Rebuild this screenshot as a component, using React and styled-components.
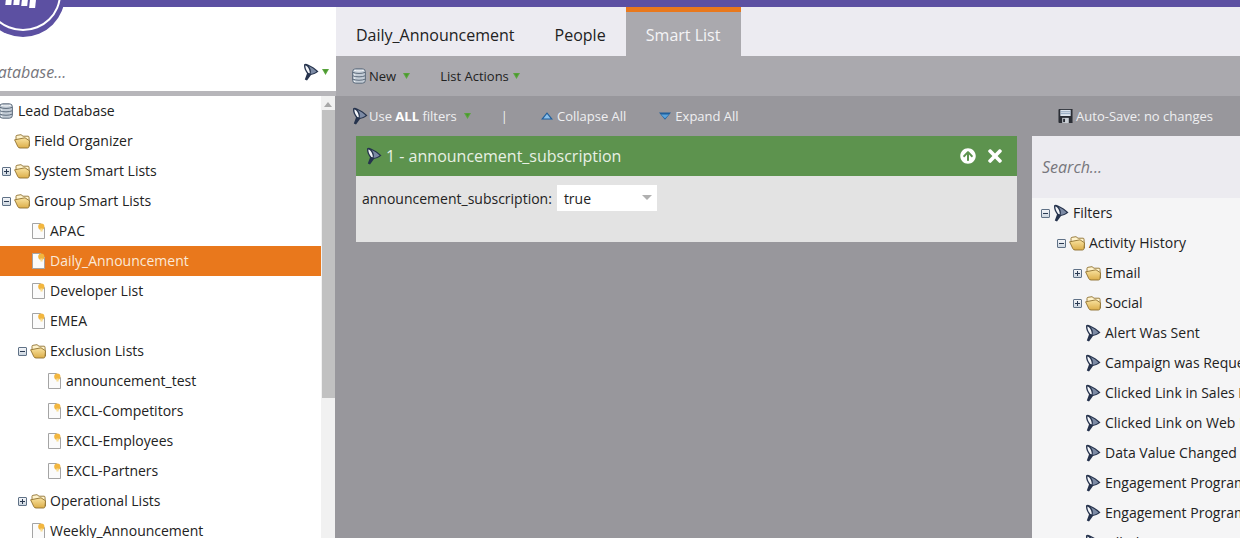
import React from "react";
import styled, { createGlobalStyle } from "styled-components";
import { FaArrowCircleUp, FaTimes } from "react-icons/fa";

const GlobalStyle = createGlobalStyle`
    html, body {
        margin: 0;
        padding: 0;
        background: #ffffff;
    }
    * {
        box-sizing: border-box;
    }
`;

const leadTree = [
    { depth: 0, icon: "db", label: "Lead Database" },
    { depth: 1, icon: "folder", label: "Field Organizer" },
    { depth: 1, icon: "folder", toggle: "plus", label: "System Smart Lists" },
    { depth: 1, icon: "folder", toggle: "minus", label: "Group Smart Lists" },
    { depth: 2, icon: "doc", label: "APAC" },
    { depth: 2, icon: "doc", label: "Daily_Announcement", selected: true },
    { depth: 2, icon: "doc", label: "Developer List" },
    { depth: 2, icon: "doc", label: "EMEA" },
    { depth: 2, icon: "folder", toggle: "minus", label: "Exclusion Lists" },
    { depth: 3, icon: "doc", label: "announcement_test" },
    { depth: 3, icon: "doc", label: "EXCL-Competitors" },
    { depth: 3, icon: "doc", label: "EXCL-Employees" },
    { depth: 3, icon: "doc", label: "EXCL-Partners" },
    { depth: 2, icon: "folder", toggle: "plus", label: "Operational Lists" },
    { depth: 2, icon: "doc", label: "Weekly_Announcement" },
];

const filterTree = [
    { depth: 1, icon: "funnel", toggle: "minus", label: "Filters" },
    { depth: 2, icon: "folder", toggle: "minus", label: "Activity History" },
    { depth: 3, icon: "folder", toggle: "plus", label: "Email" },
    { depth: 3, icon: "folder", toggle: "plus", label: "Social" },
    { depth: 3, icon: "funnel", label: "Alert Was Sent" },
    { depth: 3, icon: "funnel", label: "Campaign was Requested" },
    { depth: 3, icon: "funnel", label: "Clicked Link in Sales Email" },
    { depth: 3, icon: "funnel", label: "Clicked Link on Web Page" },
    { depth: 3, icon: "funnel", label: "Data Value Changed" },
    { depth: 3, icon: "funnel", label: "Engagement Program Cadence" },
    { depth: 3, icon: "funnel", label: "Engagement Program Email" },
    { depth: 3, icon: "funnel", label: "Filled Out Form" },
];

function FunnelIcon() {
    return (
        <svg width="16" height="18" viewBox="0 0 16 18">
            <path
                d="M1 1.5 Q2.5 0.2 5 1.5 C9 3.2 12.5 5.6 15.5 8.5 C12.5 10.8 10 11.5 8 12 L4 17.5 L1.8 16.5 L4 10.5 C2 7.5 0.8 5 1 1.5 Z"
                fill="#26334d"
            />
            <path d="M5.5 3 C9 4.6 11.5 6.5 13.6 8.4 C11.5 9.8 9.5 10.6 7.5 10.8 C8.5 8 7.5 5 5.5 3 Z" fill="#7c8aa4" />
            <path d="M2.3 2.6 C4.5 3.2 6.6 6 6.8 10.2 L5.4 10 C3.5 7.8 2.4 5.4 2.3 2.6 Z" fill="#f4f6fa" />
        </svg>
    );
}

function FolderIcon() {
    return (
        <svg width="16" height="15" viewBox="0 0 16 15">
            <defs>
                <linearGradient id="folderFront" x1="0" y1="0" x2="0" y2="1">
                    <stop offset="0" stopColor="#f9e3a0" />
                    <stop offset="1" stopColor="#dcae4a" />
                </linearGradient>
            </defs>
            <path
                d="M2 4.5 L2 2.4 Q2 1.4 3 1.3 L7 0.7 L9 2.2 L14 2.2 Q15 2.2 15 3.2 L15.5 12 L5 13.5 Z"
                fill="#fff3cc"
                stroke="#8f7130"
                strokeWidth="0.9"
            />
            <path
                d="M0.6 5.8 L11 3.8 L15.5 6.8 L15 12.6 Q14.8 14 13.5 14 L6 14 Q4.5 14 3.8 12.6 Z"
                fill="url(#folderFront)"
                stroke="#8f7130"
                strokeWidth="0.9"
                strokeLinejoin="round"
            />
        </svg>
    );
}

function DocIcon() {
    return (
        <svg width="13" height="16" viewBox="0 0 13 16">
            <path d="M0.5 0.5 H8.5 L12.5 4.5 V15.5 H0.5 Z" fill="#fbfbfb" stroke="#a4a4a4" />
            <circle cx="9.3" cy="3.7" r="3.1" fill="#f2b63f" />
            <rect x="8.4" y="5.5" width="2.2" height="3" fill="#f8dc92" />
        </svg>
    );
}

function DbIcon() {
    return (
        <svg width="14" height="16" viewBox="0 0 14 16">
            <rect x="0.6" y="0.8" width="12.8" height="14.4" rx="3" fill="#c3ccd6" stroke="#5e6c7c" />
            <path
                d="M1 4.4 C4 5.8 10 5.8 13 4.4 M1 7.8 C4 9.2 10 9.2 13 7.8 M1 11.2 C4 12.6 10 12.6 13 11.2"
                fill="none"
                stroke="#5e6c7c"
            />
            <path d="M2 2.2 C5 3.2 9 3.2 12 2.2" fill="none" stroke="#f4f6f8" />
            <path d="M2.6 6.2 V7.4 M2.6 9.6 V10.8 M2.6 13 V14" stroke="#f4f6f8" strokeWidth="1.3" />
        </svg>
    );
}

function SaveIcon() {
    return (
        <svg width="15" height="16" viewBox="0 0 16 16">
            <path d="M0.5 1.5 Q0.5 0.5 1.5 0.5 H15.5 V15.5 H1.5 Q0.5 15.5 0.5 14.5 Z" fill="#2b2e35" />
            <rect x="2.5" y="1.5" width="11" height="6.5" fill="#dfe6ee" />
            <rect x="2.5" y="3" width="11" height="1" fill="#8fa4bb" />
            <rect x="2.5" y="5" width="11" height="1" fill="#8fa4bb" />
            <rect x="4.5" y="10" width="7" height="5.5" fill="#c9ced4" />
            <rect x="5.5" y="11" width="2" height="3.5" fill="#2b2e35" />
        </svg>
    );
}

function TreeIcon({ name }) {
    if (name === "db") return <DbIcon />;
    if (name === "folder") return <FolderIcon />;
    if (name === "doc") return <DocIcon />;
    return <FunnelIcon />;
}

function GreenArrow() {
    return (
        <svg width="9" height="8" viewBox="0 0 9 8">
            <path d="M1 1 H8 L4.5 7 Z" fill="#5aa63e" />
            <path d="M2.8 1.8 H6.2 L4.5 4.8 Z" fill="#4a9630" />
        </svg>
    );
}

function BlueTriangle({ dir }) {
    const points = dir === "up" ? "6,0.2 12,7.6 0,7.6" : "0,0.4 12,0.4 6,7.8";
    const band = dir === "up" ? "6,2 9.6,6.6 2.4,6.6" : "2,2.6 10,2.6 6,6.4";
    return (
        <svg width="12" height="8" viewBox="0 0 12 8">
            <polygon points={points} fill="#1f5f9c" />
            <polygon points={band} fill={dir === "up" ? "#8cc0ea" : "#5aa3dc"} />
        </svg>
    );
}

function TreeRow({ row }) {
    return (
        <Row $selected={row.selected}>
            <Indent $depth={row.depth}>
                {row.toggle && (
                    <Toggle>
                        <ToggleBar />
                        {row.toggle === "plus" && <ToggleBar $vertical />}
                    </Toggle>
                )}
            </Indent>
            <IconSlot>
                <TreeIcon name={row.icon} />
            </IconSlot>
            <RowLabel>{row.label}</RowLabel>
        </Row>
    );
}

function App() {
    return (
        <Page>
            <GlobalStyle />
            <TopBar />
            <Logo>
                <LogoBar $h={5} />
                <LogoBar $h={5} />
                <LogoBar $h={6} />
                <LogoBar $h={8} />
            </Logo>
            <Columns>
                <LeadPanel>
                    <LeadSearch>
                        <LeadPlaceholder>Database...</LeadPlaceholder>
                        <LeadFilter>
                            <FunnelIcon />
                            <GreenArrow />
                        </LeadFilter>
                    </LeadSearch>
                    <LeadBody>
                        <LeadRows>
                            {leadTree.map((row) => (
                                <TreeRow key={row.label} row={row} />
                            ))}
                        </LeadRows>
                        <ScrollTrack>
                            <ScrollArrow />
                            <ScrollThumb />
                        </ScrollTrack>
                    </LeadBody>
                </LeadPanel>
                <Main>
                    <Tabs>
                        <Tab>Daily_Announcement</Tab>
                        <Tab>People</Tab>
                        <ActiveTab>Smart List</ActiveTab>
                    </Tabs>
                    <ActionBar>
                        <ActionItem>
                            <DbIcon />
                            New
                            <ArrowGap $left={3}>
                                <GreenArrow />
                            </ArrowGap>
                        </ActionItem>
                        <ActionItem>
                            List Actions
                            <GreenArrow />
                        </ActionItem>
                    </ActionBar>
                    <FilterBar>
                        <FilterGroup>
                            <FilterItem $gap={1}>
                                <FunnelIcon />
                                <span>
                                    Use <b>ALL</b> filters
                                </span>
                                <ArrowGap $left={5}>
                                    <GreenArrow />
                                </ArrowGap>
                            </FilterItem>
                            <Pipe>|</Pipe>
                            <FilterItem $gap={4}>
                                <BlueTriangle dir="up" />
                                Collapse All
                            </FilterItem>
                            <FilterItem $gap={4}>
                                <BlueTriangle dir="down" />
                                Expand All
                            </FilterItem>
                        </FilterGroup>
                        <AutoSave>
                            <SaveIcon />
                            Auto-Save: no changes
                        </AutoSave>
                    </FilterBar>
                    <Workspace>
                        <Canvas>
                            <Card>
                                <CardHeader>
                                    <CardTitle>
                                        <FunnelIcon />1 - announcement_subscription
                                    </CardTitle>
                                    <CardActions>
                                        <FaArrowCircleUp size={16} />
                                        <FaTimes size={20} />
                                    </CardActions>
                                </CardHeader>
                                <CardBody>
                                    <FieldLabel>announcement_subscription:</FieldLabel>
                                    <Select>
                                        true
                                        <SelectCaret />
                                    </Select>
                                </CardBody>
                            </Card>
                        </Canvas>
                        <Palette>
                            <PaletteSearch>Search...</PaletteSearch>
                            <PaletteRows>
                                {filterTree.map((row) => (
                                    <TreeRow key={row.label} row={row} />
                                ))}
                            </PaletteRows>
                        </Palette>
                    </Workspace>
                </Main>
            </Columns>
        </Page>
    );
}

const Page = styled.div`
    position: relative;
    width: 1240px;
    height: 538px;
    display: flex;
    flex-direction: column;
    overflow: hidden;
    background: #ffffff;
    color: #222222;
    font-family: "Open Sans", "Liberation Sans", sans-serif;
    font-size: 14px;
`;

const TopBar = styled.div`
    height: 7px;
    flex: none;
    background: #5c50a2;
`;

const Logo = styled.div`
    position: absolute;
    left: -19px;
    top: -47px;
    width: 84px;
    height: 84px;
    padding: 0 0 31px;
    border-radius: 50%;
    background: #5c50a2;
    display: flex;
    justify-content: center;
    align-items: flex-start;
    gap: 2px;

    &::after {
        content: "";
        position: absolute;
        inset: 4px 4px 6px;
        border-radius: 50%;
        border: 2px solid #ffffff;
        clip-path: inset(50% 0 0 0);
    }
`;

const LogoBar = styled.span`
    width: 6px;
    height: ${(props) => props.$h + 47}px;
    background: #ffffff;
    transform: skewX(-6deg);
`;

const Columns = styled.div`
    flex: 1;
    min-height: 0;
    display: flex;
`;

const LeadPanel = styled.div`
    width: 336px;
    flex: none;
    display: flex;
    flex-direction: column;
    background: #ffffff;
`;

const LeadSearch = styled.div`
    height: 89px;
    flex: none;
    padding: 0 6px 4px 0;
    display: flex;
    align-items: flex-end;
    justify-content: space-between;
    border-bottom: 5px solid #b7b6ba;
    overflow: hidden;
`;

const LeadPlaceholder = styled.div`
    margin-left: -13px;
    height: 30px;
    line-height: 30px;
    font-size: 16px;
    font-style: italic;
    color: #77767c;
`;

const LeadFilter = styled.div`
    height: 30px;
    display: flex;
    align-items: center;
    gap: 2px;
`;

const LeadBody = styled.div`
    flex: 1;
    min-height: 0;
    display: flex;
    border-right: 1px solid #98979c;
`;

const LeadRows = styled.div`
    flex: 1;
    min-width: 0;
    overflow: hidden;
`;

const ScrollTrack = styled.div`
    width: 14px;
    flex: none;
    background: #f1f1f1;
    display: flex;
    flex-direction: column;
    align-items: center;
`;

const ScrollArrow = styled.div`
    margin: 6px 0 3px;
    width: 0;
    height: 0;
    border-left: 4px solid transparent;
    border-right: 4px solid transparent;
    border-bottom: 5px solid #a8a8a8;
`;

const ScrollThumb = styled.div`
    width: 13px;
    height: 288px;
    background: #c1c1c1;
`;

const Row = styled.div`
    height: 30px;
    display: flex;
    align-items: center;
    white-space: nowrap;
    background: ${(props) => (props.$selected ? "#e9781c" : "transparent")};
    color: ${(props) => (props.$selected ? "#fbe9d8" : "#222222")};
`;

const Indent = styled.div`
    width: 12px;
    flex: none;
    margin-left: ${(props) => props.$depth * 16 - 14}px;
    display: flex;
    align-items: center;
`;

const Toggle = styled.div`
    position: relative;
    width: 9px;
    height: 9px;
    background: linear-gradient(#f4f6f9, #cdd6e0);
    border: 1px solid #5f7186;
    border-radius: 1px;
`;

const ToggleBar = styled.span`
    position: absolute;
    left: ${(props) => (props.$vertical ? "3px" : "1px")};
    top: ${(props) => (props.$vertical ? "1px" : "3px")};
    width: ${(props) => (props.$vertical ? "1px" : "5px")};
    height: ${(props) => (props.$vertical ? "5px" : "1px")};
    background: #2a3a52;
`;

const IconSlot = styled.div`
    width: 16px;
    margin-right: 4px;
    flex: none;
    display: flex;
    align-items: center;
    justify-content: center;
`;

const RowLabel = styled.span`
    line-height: 30px;
`;

const Main = styled.div`
    flex: 1;
    min-width: 0;
    display: flex;
    flex-direction: column;
    background: #98979c;
`;

const Tabs = styled.div`
    height: 49px;
    flex: none;
    padding-left: 20px;
    display: flex;
    background: #ecebf1;
    font-size: 16px;
`;

const Tab = styled.div`
    margin-right: 40px;
    line-height: 56px;
    height: 49px;
    color: #222222;
`;

const ActiveTab = styled.div`
    width: 115px;
    margin-left: -20px;
    border-top: 5px solid #e9781c;
    background: #aaa9ae;
    color: #f4f4f6;
    text-align: center;
    line-height: 46px;
`;

const ActionBar = styled.div`
    height: 40px;
    flex: none;
    padding-left: 16px;
    display: flex;
    align-items: center;
    gap: 29px;
    background: #aaa9ae;
    font-size: 13px;
    color: #222222;
`;

const ActionItem = styled.div`
    display: flex;
    align-items: center;
    gap: 3px;
`;

const ArrowGap = styled.span`
    display: flex;
    margin-left: ${(props) => props.$left}px;
`;

const FilterBar = styled.div`
    height: 40px;
    flex: none;
    padding: 0 27px 0 16px;
    display: flex;
    align-items: center;
    justify-content: space-between;
    font-size: 13px;
    color: #efeff1;
`;

const FilterGroup = styled.div`
    display: flex;
    align-items: center;

    b {
        color: #ffffff;
    }
`;

const FilterItem = styled.div`
    display: flex;
    align-items: center;
    gap: ${(props) => props.$gap}px;
    margin-right: 33px;
`;

const Pipe = styled.span`
    margin: 0 33px 0 -4px;
`;

const AutoSave = styled.div`
    display: flex;
    align-items: center;
    gap: 3px;
`;

const Workspace = styled.div`
    flex: 1;
    min-height: 0;
    display: flex;
`;

const Canvas = styled.div`
    width: 696px;
    flex: none;
    padding: 0 15px 0 20px;
`;

const Card = styled.div`
    height: 106px;
    background: #e3e3e3;
`;

const CardHeader = styled.div`
    height: 40px;
    padding: 0 12px 0 10px;
    display: flex;
    align-items: center;
    justify-content: space-between;
    background: #5d934e;
    color: #e8f0e4;
`;

const CardTitle = styled.div`
    display: flex;
    align-items: center;
    gap: 4px;
    font-size: 16px;
`;

const CardActions = styled.div`
    display: flex;
    align-items: center;
    gap: 9px;
    color: #ffffff;
`;

const CardBody = styled.div`
    padding: 9px 6px;
    display: flex;
    align-items: center;
    gap: 5px;
`;

const FieldLabel = styled.span`
    color: #222222;
`;

const Select = styled.div`
    position: relative;
    width: 100px;
    height: 26px;
    padding-left: 7px;
    background: #ffffff;
    line-height: 28px;
    color: #222222;
`;

const SelectCaret = styled.span`
    position: absolute;
    right: 5px;
    top: 10px;
    width: 0;
    height: 0;
    border-left: 5px solid transparent;
    border-right: 5px solid transparent;
    border-top: 5px solid #b0b0b0;
`;

const Palette = styled.div`
    flex: 1;
    min-width: 0;
    display: flex;
    flex-direction: column;
    background: #f5f5f6;
    overflow: hidden;
`;

const PaletteSearch = styled.div`
    height: 62px;
    flex: none;
    padding-left: 10px;
    background: #ecebf0;
    font-size: 16px;
    font-style: italic;
    line-height: 62px;
    color: #77767c;
`;

const PaletteRows = styled.div`
    padding-left: 7px;
`;

export default App;
